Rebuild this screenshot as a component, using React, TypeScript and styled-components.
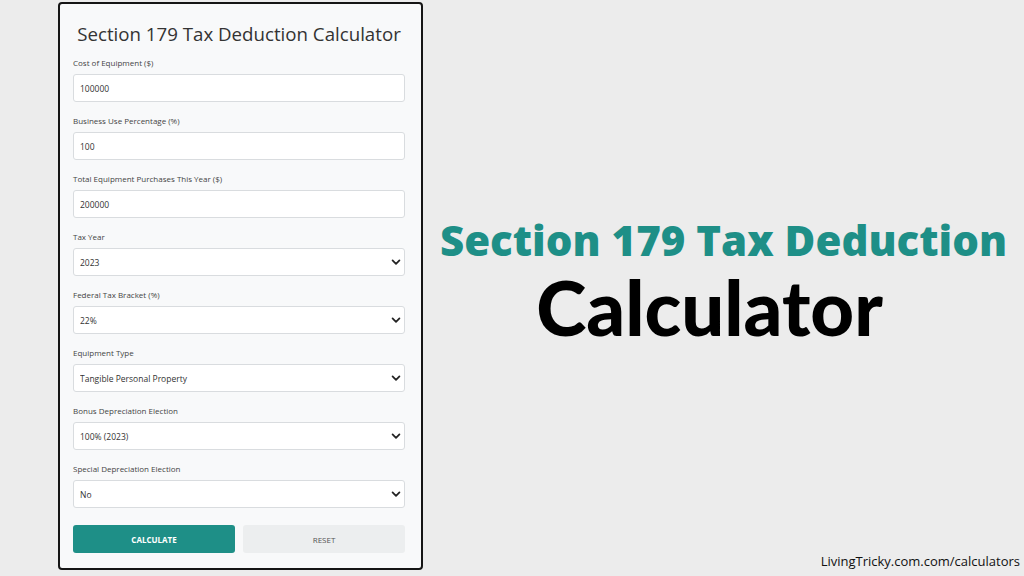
import React, { useState } from 'react';
import styled, { createGlobalStyle } from 'styled-components';

const GlobalStyle = createGlobalStyle`
  * { box-sizing: border-box; }
  body {
    margin: 0;
    background: #ececec;
    font-family: "Open Sans", sans-serif;
  }
`;

type Field =
  | { label: string; kind: 'input'; value: string }
  | { label: string; kind: 'select'; value: string; options: string[] };

const fields: Field[] = [
  { label: 'Cost of Equipment ($)', kind: 'input', value: '100000' },
  { label: 'Business Use Percentage (%)', kind: 'input', value: '100' },
  { label: 'Total Equipment Purchases This Year ($)', kind: 'input', value: '200000' },
  { label: 'Tax Year', kind: 'select', value: '2023', options: ['2023', '2024', '2025'] },
  { label: 'Federal Tax Bracket (%)', kind: 'select', value: '22%', options: ['10%', '12%', '22%', '24%', '32%', '35%', '37%'] },
  { label: 'Equipment Type', kind: 'select', value: 'Tangible Personal Property', options: ['Tangible Personal Property', 'Software', 'Qualified Real Property'] },
  { label: 'Bonus Depreciation Election', kind: 'select', value: '100% (2023)', options: ['100% (2023)', '80%', 'None'] },
  { label: 'Special Depreciation Election', kind: 'select', value: 'No', options: ['No', 'Yes'] },
];

const Chevron = () => (
  <ChevronIcon viewBox="0 0 16 16" width="10" height="10">
    <path d="M2.5 5.5 L8 11 L13.5 5.5" fill="none" stroke="#222" strokeWidth="2.8" strokeLinecap="round" strokeLinejoin="round" />
  </ChevronIcon>
);

const App: React.FC = () => {
  const [values, setValues] = useState<string[]>(fields.map((f) => f.value));

  const update = (i: number, v: string) => {
    const next = [...values];
    next[i] = v;
    setValues(next);
  };

  return (
    <>
      <GlobalStyle />
      <Page>
        <Card>
          <CardTitle>Section 179 Tax Deduction Calculator</CardTitle>
          {fields.map((f, i) => (
            <Group key={f.label}>
              <Label>{f.label}</Label>
              {f.kind === 'input' ? (
                <Input value={values[i]} onChange={(e) => update(i, e.target.value)} />
              ) : (
                <SelectWrap>
                  <Select value={values[i]} onChange={(e) => update(i, e.target.value)}>
                    {f.options.map((o) => (
                      <option key={o}>{o}</option>
                    ))}
                  </Select>
                  <Chevron />
                </SelectWrap>
              )}
            </Group>
          ))}
          <ButtonRow>
            <Button $primary>CALCULATE</Button>
            <Button>RESET</Button>
          </ButtonRow>
        </Card>

        <Side>
          <Headline>
            <Teal>Section 179 Tax Deduction</Teal>
            <Big>Calculator</Big>
          </Headline>
          <Footer>LivingTricky.com.com/calculators</Footer>
        </Side>
      </Page>
    </>
  );
};

export default App;

const Page = styled.div`
  width: 1024px;
  height: 576px;
  display: flex;
  padding: 2px 0 6px 58px;
  overflow: hidden;
`;

const Card = styled.div`
  width: 365px;
  height: 568px;
  flex-shrink: 0;
  background: #f8f9fa;
  border: 2px solid #151515;
  border-radius: 4px;
  padding: 16px 16px 0 13px;
`;

const CardTitle = styled.h1`
  margin: 0 0 9px;
  text-align: center;
  font-family: "Open Sans", sans-serif;
  font-weight: 500;
  font-size: 18.7px;
  line-height: 28px;
  color: #333;
`;

const Group = styled.div`
  margin-bottom: 13px;
`;

const Label = styled.div`
  font-size: 8px;
  line-height: 12px;
  color: #444;
  margin-bottom: 5px;
`;

const Input = styled.input`
  display: block;
  width: 100%;
  height: 28px;
  border: 1px solid #d9dcdf;
  border-radius: 3px;
  background: #fff;
  padding: 0 6px;
  font-family: "Open Sans", sans-serif;
  font-size: 8.5px;
  color: #333;
  outline: none;
`;

const SelectWrap = styled.div`
  position: relative;
`;

const Select = styled.select`
  display: block;
  width: 100%;
  height: 28px;
  border: 1px solid #d9dcdf;
  border-radius: 3px;
  background: #fff;
  padding: 0 6px;
  font-family: "Open Sans", sans-serif;
  font-size: 8.5px;
  color: #333;
  appearance: none;
  outline: none;
`;

const ChevronIcon = styled.svg`
  position: absolute;
  right: 4px;
  top: 9px;
  pointer-events: none;
`;

const ButtonRow = styled.div`
  display: grid;
  grid-template-columns: 1fr 1fr;
  gap: 8px;
  margin-top: 17px;
`;

const Button = styled.button<{ $primary?: boolean }>`
  height: 28px;
  border: none;
  border-radius: 3px;
  background: ${(p) => (p.$primary ? '#1e8f87' : '#eceeef')};
  color: ${(p) => (p.$primary ? '#fff' : '#555')};
  font-family: "Open Sans", sans-serif;
  font-weight: ${(p) => (p.$primary ? 700 : 400)};
  font-size: 8px;
  cursor: pointer;
`;

const Side = styled.div`
  flex: 1;
  display: flex;
  flex-direction: column;
`;

const Headline = styled.div`
  flex: 1;
  display: flex;
  flex-direction: column;
  align-items: center;
  justify-content: center;
  padding-top: 12px;
`;

const Teal = styled.div`
  font-family: "Open Sans", sans-serif;
  font-weight: 800;
  font-size: 42px;
  line-height: 48px;
  color: #1e8f87;
`;

const Big = styled.div`
  margin-right: 28px;
  font-family: Lato, sans-serif;
  font-weight: 900;
  font-size: 76px;
  line-height: 86px;
  color: #000;
`;

const Footer = styled.div`
  align-self: flex-end;
  padding-right: 4px;
  font-family: "Open Sans", sans-serif;
  font-size: 13px;
  color: #111;
`;
